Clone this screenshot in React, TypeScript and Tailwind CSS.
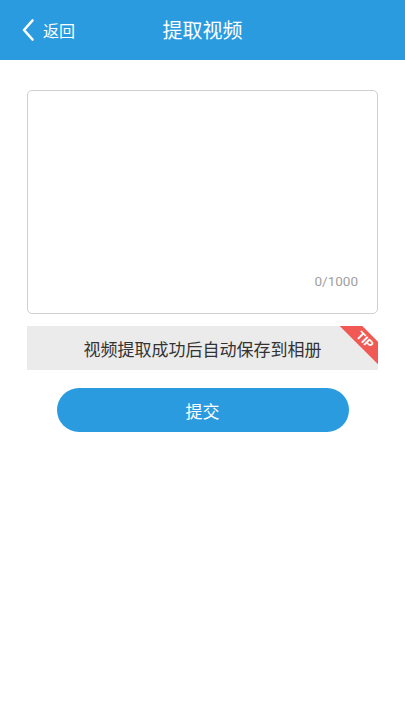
import React from "react";

export default function App() {
  return (
    <div className="min-h-[720px] w-full bg-white" style={{ fontFamily: '"Noto Sans CJK SC", "Noto Sans", sans-serif' }}>
      <div className="relative flex h-[60px] items-center justify-center bg-[#2b9be0]">
        <div className="absolute left-[21px] top-0 flex h-full items-center gap-[8px]">
          <svg width="14" height="24" viewBox="0 0 14 24" fill="none">
            <polyline points="11.5,2.5 3,12 11.5,21.5" stroke="white" strokeWidth="2.6" strokeLinecap="round" strokeLinejoin="round" />
          </svg>
          <span className="text-[16px] leading-none text-white">返回</span>
        </div>
        <span className="text-[20px] leading-none text-white">提取视频</span>
      </div>

      <div className="px-[27px] pt-[30px]">
        <div className="flex h-[224px] flex-col items-end justify-end rounded-[5px] border border-[#cfcfcf] px-[19px] pb-[25px]">
          <span className="text-[13.5px] leading-none text-[#a0a0a0]" style={{ fontFamily: 'Roboto, "Noto Sans", sans-serif' }}>0/1000</span>
        </div>

        <div className="relative mt-[12px] flex h-[44px] items-center justify-center overflow-hidden bg-[#ebebeb]">
          <span className="text-[17px] leading-none text-[#333333]">视频提取成功后自动保存到相册</span>
          <div className="absolute right-0 top-0 h-[19px] w-[19px] bg-white [clip-path:polygon(0_0,100%_0,100%_100%)]" />
          <div className="absolute right-[-18px] top-[6px] flex h-[16px] w-[62px] rotate-45 items-center justify-center bg-[#f15a54]">
            <span className="text-[12px] font-bold leading-none text-white" style={{ fontFamily: '"Liberation Sans", Arial, sans-serif' }}>TIP</span>
          </div>
        </div>

        <div className="mt-[18px] flex justify-center">
          <button className="flex h-[44px] w-[292px] items-center justify-center rounded-full bg-[#2b9be0]">
            <span className="text-[17px] leading-none text-white">提交</span>
          </button>
        </div>
      </div>
    </div>
  );
}
